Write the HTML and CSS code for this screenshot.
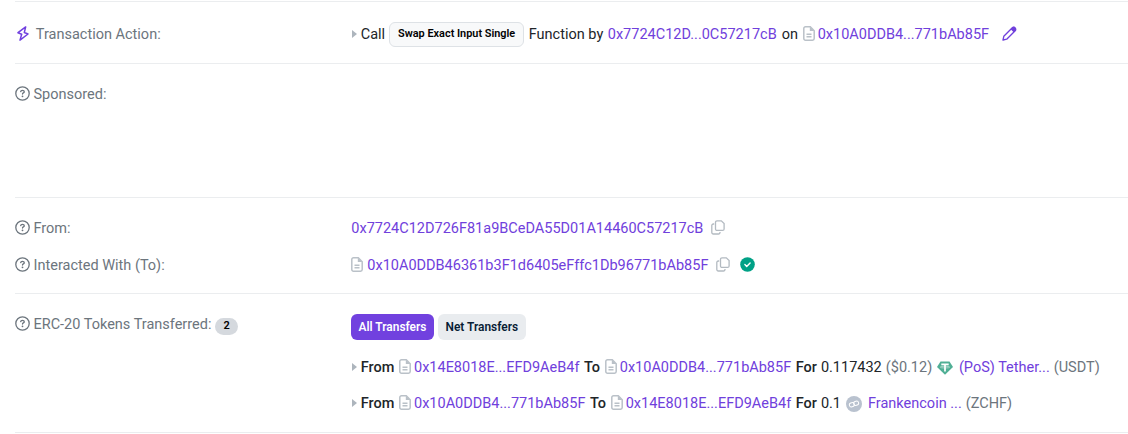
FILE: index.html
```html
<!DOCTYPE html>
<html lang="en">
<head>
<meta charset="utf-8">
<title>Transaction Details</title>
<link rel="stylesheet" href="styles.css">
</head>
<body>
<svg class="sprite" aria-hidden="true">
  <symbol id="help" viewBox="0 0 15 15"><circle cx="7.5" cy="7.5" r="6.7" fill="none" stroke="currentColor" stroke-width="1.3"/><path d="M5.700 5.500c.2-.8.800-1.200 1.600-1.200 1.200 0 2 .5 2 1.400 0 1.200-1.800 1.200-1.800 2.300" fill="none" stroke="currentColor" stroke-width="1.300" stroke-linecap="round"/><circle cx="7.500" cy="10.300" r=".9" fill="currentColor"/></symbol>
  <symbol id="file" viewBox="0 0 12 15"><path d="M2.500.8h4.800l3.900 3.900v7.800a1.700 1.700 0 0 1-1.700 1.700h-7A1.700 1.700 0 0 1 .8 12.500V2.500A1.700 1.700 0 0 1 2.500.8zM3.500 8.200h5M3.500 10.800h5" fill="none" stroke="currentColor" stroke-width="1.500"/><path d="M6.800.8v4.200h4.400z" fill="currentColor"/></symbol>
  <symbol id="copy" viewBox="0 0 14 15"><path d="M6 .8h4.300l2.800 2.800v5.300a1.500 1.500 0 0 1-1.500 1.500H6a1.500 1.500 0 0 1-1.500-1.500V2.300A1.500 1.500 0 0 1 6 .8zM3.200 4H2.300A1.500 1.500 0 0 0 .8 5.500v7A1.500 1.500 0 0 0 2.300 14h5.200A1.500 1.500 0 0 0 9 12.500v-.6" fill="none" stroke="currentColor" stroke-width="1.300"/></symbol>
</svg>
<main class="details">
  <section class="section action">
    <div class="row">
      <div class="label"><svg class="bolt" viewBox="0 0 12 15"><path d="M8.700.9 1 6.700l3.700 1.600-1.700 5.800L11 8 7.300 6.500z" fill="none" stroke="currentColor" stroke-width="1.500" stroke-linejoin="round"/></svg>Transaction Action:</div>
      <div class="value"><i class="caret"></i><span class="call">Call</span><span class="method">Swap Exact Input Single</span><span class="function">Function by</span><a class="caller">0x7724C12D...0C57217cB</a><span class="on">on</span><svg class="file"><use href="#file"/></svg><a>0x10A0DDB4...771bAb85F</a><svg class="pen" viewBox="0 0 15 15"><path d="M1 14l.8-3.700 8.500-8.500a1.500 1.500 0 0 1 2.100 0l.8.8a1.500 1.500 0 0 1 0 2.100l-8.500 8.500z" fill="none" stroke="currentColor" stroke-width="1.300" stroke-linejoin="round"/><path d="M8.700 3.300 11 1q1.300-.9 2.300.200l.5.500q1 1 .1 2.200l-2.300 2.300z" fill="currentColor"/></svg></div>
    </div>
  </section>
  <section class="section sponsored">
    <div class="row"><div class="label"><svg class="help"><use href="#help"/></svg>Sponsored:</div></div>
  </section>
  <section class="section parties">
    <div class="row">
      <div class="label"><svg class="help"><use href="#help"/></svg>From:</div>
      <div class="value"><a class="from-address">0x7724C12D726F81a9BCeDA55D01A14460C57217cB</a><svg class="copy"><use href="#copy"/></svg></div>
    </div>
    <div class="row">
      <div class="label"><svg class="help"><use href="#help"/></svg>Interacted With (To):</div>
      <div class="value"><svg class="file first"><use href="#file"/></svg><a class="to-address">0x10A0DDB46361b3F1d6405eFffc1Db96771bAb85F</a><svg class="copy"><use href="#copy"/></svg><svg class="verified" viewBox="0 0 15 15"><circle cx="7.500" cy="7.500" r="7.300" fill="#00a186"/><path d="m4.900 7.600 1.800 1.800 3.400-3.500" fill="none" stroke="#fff" stroke-width="1.400" stroke-linecap="round" stroke-linejoin="round"/></svg></div>
    </div>
  </section>
  <section class="section tokens">
    <div class="label"><svg class="help"><use href="#help"/></svg>ERC-20 Tokens Transferred:<span class="count">2</span></div>
    <div class="transfers">
      <div class="tabs"><span class="tab active">All Transfers</span><span class="tab">Net Transfers</span></div>
      <div class="value"><i class="caret"></i><b class="from">From</b><svg class="file"><use href="#file"/></svg><a class="sender">0x14E8018E...EFD9AeB4f</a><b class="to">To</b><svg class="file"><use href="#file"/></svg><a class="receiver">0x10A0DDB4...771bAb85F</a><b class="for">For</b><span class="amount">0.117432</span><span class="muted">($0.12)</span><svg class="tether" viewBox="0 0 16 14"><path d="M3.500.5h9L16 6l-8 7.700L0 6z" fill="#50af95"/><path d="M4.300 3.300h7.400M8 3.300v7.200" stroke="#fff" stroke-width="1.700" fill="none"/><ellipse cx="8" cy="6.100" rx="4.600" ry=".9" fill="none" stroke="#fff" stroke-width=".5"/></svg><a>(PoS) Tether...</a><span class="symbol">(USDT)</span></div>
      <div class="value"><i class="caret"></i><b class="from">From</b><svg class="file"><use href="#file"/></svg><a class="sender">0x10A0DDB4...771bAb85F</a><b class="to">To</b><svg class="file"><use href="#file"/></svg><a class="receiver">0x14E8018E...EFD9AeB4f</a><b class="for">For</b><span class="amount">0.1</span><svg class="chain" viewBox="0 0 16 16"><circle cx="8" cy="8" r="8" fill="#b9c2cf"/><g fill="none" stroke="#fff" stroke-width="1" transform="rotate(-20 8 8)"><rect x="3.200" y="6" width="5" height="4" rx="2"/><rect x="7.800" y="6" width="5" height="4" rx="2"/></g></svg><a>Frankencoin ...</a><span class="symbol">(ZCHF)</span></div>
    </div>
  </section>
</main>
</body>
</html>
```
FILE: styles.css
```css
* { box-sizing: border-box; }
body { margin: 0; background: #fff; color: #212529; font: 14.5px/22px Roboto, sans-serif; overflow: hidden; }
.sprite { position: absolute; width: 0; height: 0; }
svg { display: block; flex: none; margin-bottom: 3px; }
.details { margin: 1px 0 0 15px; border-bottom: 1px solid #ebedef; }
.section { border-top: 1px solid #ebedef; }
.row { display: grid; grid-template-columns: 336px 1fr; }
.label { display: flex; align-items: center; height: 22px; color: #6c757d; white-space: nowrap; }
.value { display: flex; align-items: center; height: 22px; white-space: nowrap; }
.action { height: 62px; padding-top: 22px; }
.sponsored { height: 134px; padding-top: 20px; }
.parties { height: 96px; padding-top: 20px; display: flex; flex-direction: column; gap: 15px; }
.tokens { height: 139px; padding-top: 20px; display: grid; grid-template-columns: 336px 1fr; }
.help { width: 15px; height: 15px; margin-right: 3.5px; }
.bolt { width: 12px; height: 15px; margin: 0 6.8px 3px 2px; color: #7141df; }
.caret { border: solid transparent; border-width: 4px 0 4px 5px; border-left-color: #adb5bd; margin: 0 3.7px 2px 1px; }
a { color: #7040dc; }
b { font-weight: 500; }
.file { width: 12px; height: 15px; color: #bac1c8; margin-right: 3px; }
.file.first { margin-right: 4.3px; }
.from-address { margin-left: 0.3px; }
.copy { width: 14px; height: 15px; color: #b3bac1; margin-left: 7.4px; }
.verified { width: 15px; height: 15px; margin-left: 10px; }
.method { height: 25px; margin: 0 4.5px 1px 4px; padding: 0 8px; border: 1px solid #dee2e6; border-radius: 6px; background: #f8f9fa; color: #000; font-size: 10.9px; line-height: 21px; font-weight: 600; }
.caller { margin: 0 5px 0 4.5px; }
.on { margin-right: 4.7px; }
.pen { width: 15px; height: 15px; margin-left: 13px; color: #7040dc; }
.count { height: 17px; margin: 3px 0 0 4px; padding: 0 8px; border-radius: 9px; background: #d5d9de; color: #000; font-size: 11px; line-height: 16px; font-weight: 600; }
.tabs { display: flex; gap: 4px; margin-bottom: 17px; }
.tab { height: 26px; padding: 0 7.6px; border-radius: 6px; background: #e9ecef; color: #081d35; font-size: 11.9px; line-height: 26px; font-weight: 600; }
.tab.active { background: #7141df; color: #fff; }
.transfers .value + .value { margin-top: 14px; }
.from, .to { margin-right: 4.7px; }
.sender, .receiver { margin-right: 4.5px; }
.for { margin-right: 4px; }
.muted, .symbol { color: #6c757d; }
.muted { margin-left: 4px; }
.tether { width: 16px; height: 14px; margin: 0 6px 1px 4.7px; }
.chain { width: 16px; height: 16px; margin: 0 6px 0 5px; }
.symbol { margin-left: 4px; }
```
